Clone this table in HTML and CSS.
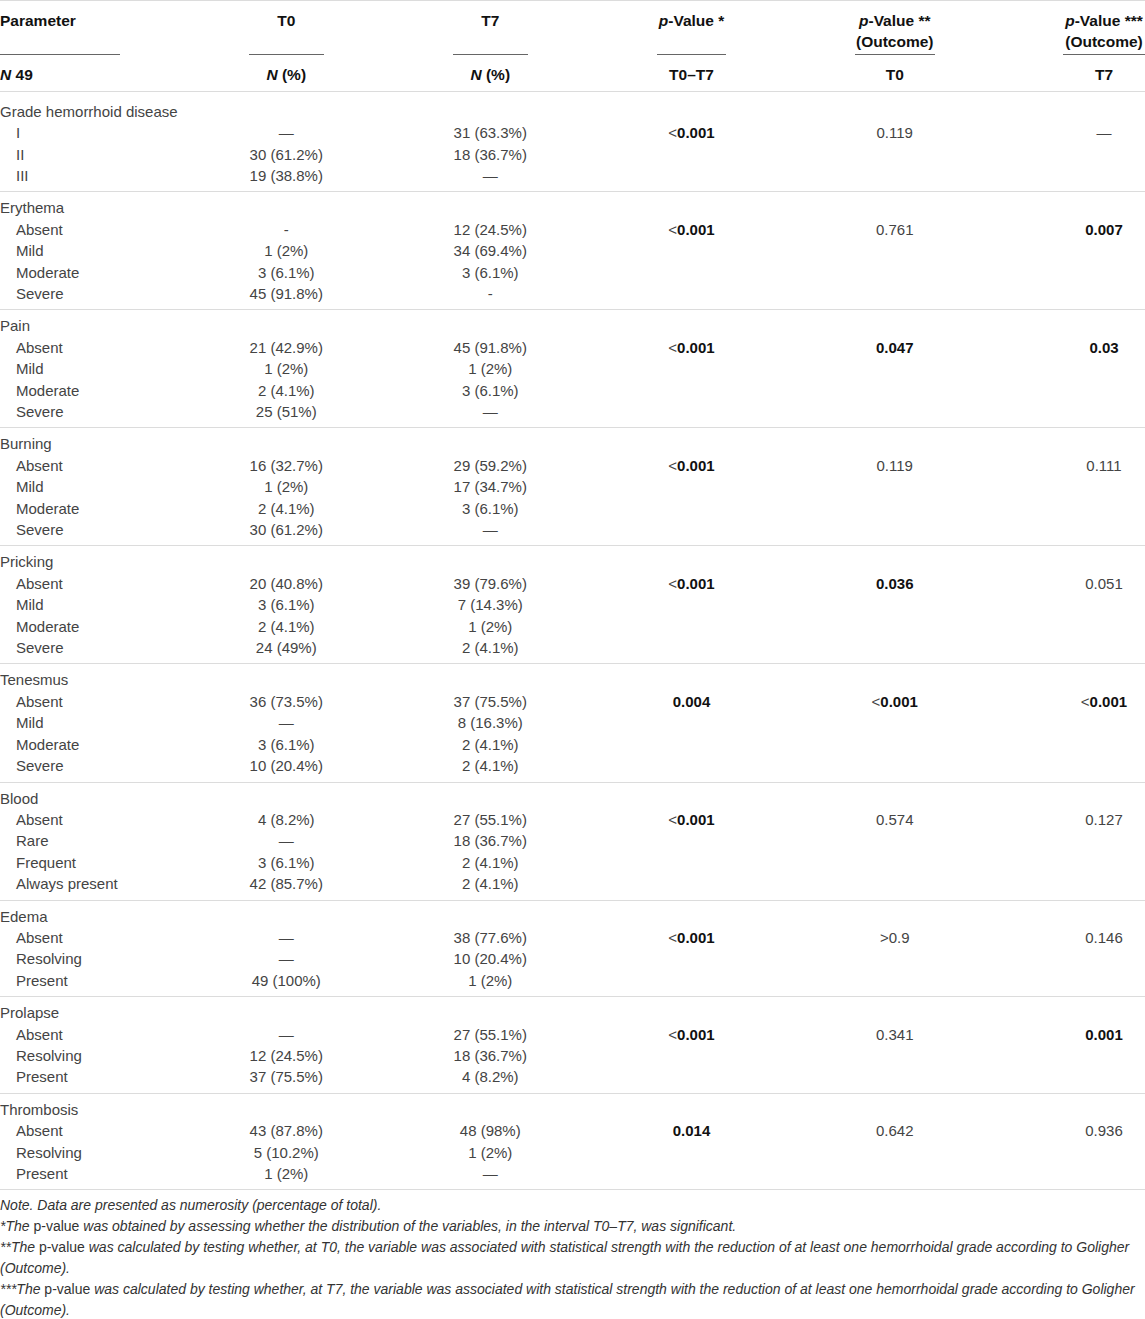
FILE: index.html
```html
<!DOCTYPE html>
<html lang="en">

<head>
    <meta charset="UTF-8" />
    <meta name="viewport" content="width=device-width, initial-scale=1.0" />
    <title>Hemorrhoid disease - T0 vs T7</title>
    <link rel="stylesheet" href="styles.css">
</head>

<body>
    <table class="data-table">
        <colgroup>
            <col class="col-param">
            <col class="col-t0">
            <col class="col-t7">
            <col class="col-p1">
            <col class="col-p2">
            <col class="col-p3">
        </colgroup>
        <thead>
            <tr class="head-top">
                <th class="param">Parameter</th>
                <th>T0</th>
                <th>T7</th>
                <th><i>p</i>-Value *</th>
                <th><i>p</i>-Value **<br>(Outcome)</th>
                <th class="last"><i>p</i>-Value ***<br>(Outcome)</th>
            </tr>
            <tr class="head-sub">
                <th class="param"><div class="rule"><i>N</i> 49</div></th>
                <th><div class="rule"><i>N</i> (%)</div></th>
                <th><div class="rule"><i>N</i> (%)</div></th>
                <th><div class="rule">T0–T7</div></th>
                <th><div class="rule">T0</div></th>
                <th class="last"><div class="rule">T7</div></th>
            </tr>
        </thead>

        <tbody class="group first">
            <tr class="title"><td colspan="6">Grade hemorrhoid disease</td></tr>
            <tr><td class="item">I</td><td>—</td><td>31 (63.3%)</td><td>&lt;<b>0.001</b></td><td>0.119</td><td class="last">—</td></tr>
            <tr><td class="item">II</td><td>30 (61.2%)</td><td>18 (36.7%)</td><td></td><td></td><td class="last"></td></tr>
            <tr class="end"><td class="item">III</td><td>19 (38.8%)</td><td>—</td><td></td><td></td><td class="last"></td></tr>
        </tbody>

        <tbody class="group">
            <tr class="title"><td colspan="6">Erythema</td></tr>
            <tr><td class="item">Absent</td><td>-</td><td>12 (24.5%)</td><td>&lt;<b>0.001</b></td><td>0.761</td><td class="last"><b>0.007</b></td></tr>
            <tr><td class="item">Mild</td><td>1 (2%)</td><td>34 (69.4%)</td><td></td><td></td><td class="last"></td></tr>
            <tr><td class="item">Moderate</td><td>3 (6.1%)</td><td>3 (6.1%)</td><td></td><td></td><td class="last"></td></tr>
            <tr class="end"><td class="item">Severe</td><td>45 (91.8%)</td><td>-</td><td></td><td></td><td class="last"></td></tr>
        </tbody>

        <tbody class="group">
            <tr class="title"><td colspan="6">Pain</td></tr>
            <tr><td class="item">Absent</td><td>21 (42.9%)</td><td>45 (91.8%)</td><td>&lt;<b>0.001</b></td><td><b>0.047</b></td><td class="last"><b>0.03</b></td></tr>
            <tr><td class="item">Mild</td><td>1 (2%)</td><td>1 (2%)</td><td></td><td></td><td class="last"></td></tr>
            <tr><td class="item">Moderate</td><td>2 (4.1%)</td><td>3 (6.1%)</td><td></td><td></td><td class="last"></td></tr>
            <tr class="end"><td class="item">Severe</td><td>25 (51%)</td><td>—</td><td></td><td></td><td class="last"></td></tr>
        </tbody>

        <tbody class="group">
            <tr class="title"><td colspan="6">Burning</td></tr>
            <tr><td class="item">Absent</td><td>16 (32.7%)</td><td>29 (59.2%)</td><td>&lt;<b>0.001</b></td><td>0.119</td><td class="last">0.111</td></tr>
            <tr><td class="item">Mild</td><td>1 (2%)</td><td>17 (34.7%)</td><td></td><td></td><td class="last"></td></tr>
            <tr><td class="item">Moderate</td><td>2 (4.1%)</td><td>3 (6.1%)</td><td></td><td></td><td class="last"></td></tr>
            <tr class="end"><td class="item">Severe</td><td>30 (61.2%)</td><td>—</td><td></td><td></td><td class="last"></td></tr>
        </tbody>

        <tbody class="group">
            <tr class="title"><td colspan="6">Pricking</td></tr>
            <tr><td class="item">Absent</td><td>20 (40.8%)</td><td>39 (79.6%)</td><td>&lt;<b>0.001</b></td><td><b>0.036</b></td><td class="last">0.051</td></tr>
            <tr><td class="item">Mild</td><td>3 (6.1%)</td><td>7 (14.3%)</td><td></td><td></td><td class="last"></td></tr>
            <tr><td class="item">Moderate</td><td>2 (4.1%)</td><td>1 (2%)</td><td></td><td></td><td class="last"></td></tr>
            <tr class="end"><td class="item">Severe</td><td>24 (49%)</td><td>2 (4.1%)</td><td></td><td></td><td class="last"></td></tr>
        </tbody>

        <tbody class="group">
            <tr class="title"><td colspan="6">Tenesmus</td></tr>
            <tr><td class="item">Absent</td><td>36 (73.5%)</td><td>37 (75.5%)</td><td><b>0.004</b></td><td>&lt;<b>0.001</b></td><td class="last">&lt;<b>0.001</b></td></tr>
            <tr><td class="item">Mild</td><td>—</td><td>8 (16.3%)</td><td></td><td></td><td class="last"></td></tr>
            <tr><td class="item">Moderate</td><td>3 (6.1%)</td><td>2 (4.1%)</td><td></td><td></td><td class="last"></td></tr>
            <tr class="end"><td class="item">Severe</td><td>10 (20.4%)</td><td>2 (4.1%)</td><td></td><td></td><td class="last"></td></tr>
        </tbody>

        <tbody class="group">
            <tr class="title"><td colspan="6">Blood</td></tr>
            <tr><td class="item">Absent</td><td>4 (8.2%)</td><td>27 (55.1%)</td><td>&lt;<b>0.001</b></td><td>0.574</td><td class="last">0.127</td></tr>
            <tr><td class="item">Rare</td><td>—</td><td>18 (36.7%)</td><td></td><td></td><td class="last"></td></tr>
            <tr><td class="item">Frequent</td><td>3 (6.1%)</td><td>2 (4.1%)</td><td></td><td></td><td class="last"></td></tr>
            <tr class="end"><td class="item">Always present</td><td>42 (85.7%)</td><td>2 (4.1%)</td><td></td><td></td><td class="last"></td></tr>
        </tbody>

        <tbody class="group">
            <tr class="title"><td colspan="6">Edema</td></tr>
            <tr><td class="item">Absent</td><td>—</td><td>38 (77.6%)</td><td>&lt;<b>0.001</b></td><td>&gt;0.9</td><td class="last">0.146</td></tr>
            <tr><td class="item">Resolving</td><td>—</td><td>10 (20.4%)</td><td></td><td></td><td class="last"></td></tr>
            <tr class="end"><td class="item">Present</td><td>49 (100%)</td><td>1 (2%)</td><td></td><td></td><td class="last"></td></tr>
        </tbody>

        <tbody class="group">
            <tr class="title"><td colspan="6">Prolapse</td></tr>
            <tr><td class="item">Absent</td><td>—</td><td>27 (55.1%)</td><td>&lt;<b>0.001</b></td><td>0.341</td><td class="last"><b>0.001</b></td></tr>
            <tr><td class="item">Resolving</td><td>12 (24.5%)</td><td>18 (36.7%)</td><td></td><td></td><td class="last"></td></tr>
            <tr class="end"><td class="item">Present</td><td>37 (75.5%)</td><td>4 (8.2%)</td><td></td><td></td><td class="last"></td></tr>
        </tbody>

        <tbody class="group">
            <tr class="title"><td colspan="6">Thrombosis</td></tr>
            <tr><td class="item">Absent</td><td>43 (87.8%)</td><td>48 (98%)</td><td><b>0.014</b></td><td>0.642</td><td class="last">0.936</td></tr>
            <tr><td class="item">Resolving</td><td>5 (10.2%)</td><td>1 (2%)</td><td></td><td></td><td class="last"></td></tr>
            <tr class="end"><td class="item">Present</td><td>1 (2%)</td><td>—</td><td></td><td></td><td class="last"></td></tr>
        </tbody>
    </table>

    <div class="notes">
        <p>Note. Data are presented as numerosity (percentage of total).</p>
        <p>*The <span class="up">p-value</span> was obtained by assessing whether the distribution of the variables, in the interval T0–T7, was significant.</p>
        <p>**The <span class="up">p-value</span> was calculated by testing whether, at T0, the variable was associated with statistical strength with the reduction of at least one hemorrhoidal grade according to Goligher<br>(Outcome).</p>
        <p>***The <span class="up">p-value</span> was calculated by testing whether, at T7, the variable was associated with statistical strength with the reduction of at least one hemorrhoidal grade according to Goligher<br>(Outcome).</p>
    </div>
</body>

</html>
```

FILE: styles.css
```css
body {
    margin: 0;
    font-family: "Liberation Sans", Arial, sans-serif;
    font-size: 15px;
    line-height: 21.4px;
    color: #444;
    background: #fff;
    width: 1145px;
}

.data-table {
    width: 1145px;
    border-collapse: collapse;
    table-layout: fixed;
    border-top: 1px solid #dcdcdc;
}

.col-param { width: 184.5px; }
.col-t0 { width: 203.5px; }
.col-t7 { width: 204.5px; }
.col-p1 { width: 198px; }
.col-p2 { width: 208.5px; }
.col-p3 { width: 146px; }

th,
td {
    padding: 0 64.5px;
    text-align: center;
    white-space: nowrap;
    vertical-align: top;
}

th.param,
td.item,
.title td {
    padding-left: 0;
    text-align: left;
}

th.last,
td.last {
    padding-left: 64px;
    padding-right: 0;
}

th {
    font-size: 15.5px;
    font-weight: bold;
    color: #111;
}

b {
    color: #111;
}

.head-top th {
    padding-top: 9px;
    padding-bottom: 1.5px;
}

.head-sub th {
    padding-bottom: 5px;
    border-bottom: 1px solid #dcdcdc;
}

.rule {
    border-top: 1px solid #666;
    padding-top: 9px;
}

.group {
    border-bottom: 1px solid #dcdcdc;
}

.title td {
    padding-top: 5px;
}

.group.first .title td {
    padding-top: 9px;
}

.end td {
    padding-bottom: 5px;
}

td.item {
    padding-left: 16px;
}

.notes {
    padding-top: 5px;
    font-size: 14px;
    line-height: 21px;
    font-style: italic;
    color: #333;
}

.notes p {
    margin: 0;
}

.notes .up {
    font-style: normal;
}
```
